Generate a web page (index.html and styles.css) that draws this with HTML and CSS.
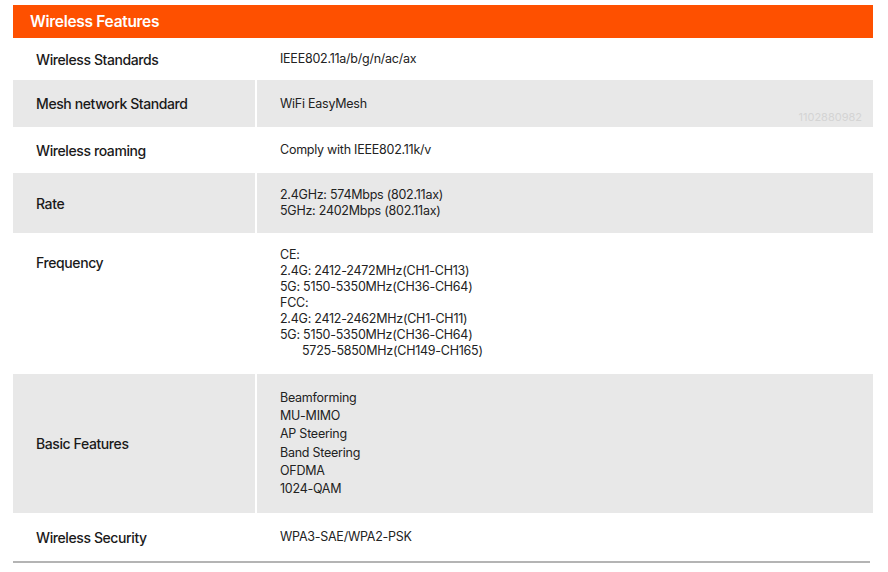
FILE: index.html
```html
<!DOCTYPE html>
<html lang="en">

<head>
  <meta charset="UTF-8">
  <meta name="viewport" content="width=device-width, initial-scale=1.0">
  <title>Wireless Features</title>
  <link rel="stylesheet" href="styles.css">
</head>

<body>
  <div class="spec">
    <div class="spec-title">Wireless Features</div>

    <div class="row row-std">
      <div class="label">Wireless Standards</div>
      <div class="value">IEEE802.11a/b/g/n/ac/ax</div>
    </div>

    <div class="row row-mesh grey">
      <div class="label">Mesh network Standard</div>
      <div class="value">WiFi EasyMesh</div>
      <span class="watermark">1102880982</span>
    </div>

    <div class="row row-roam">
      <div class="label">Wireless roaming</div>
      <div class="value">Comply with IEEE802.11k/v</div>
    </div>

    <div class="row row-rate grey">
      <div class="label">Rate</div>
      <div class="value">
        2.4GHz: 574Mbps (802.11ax)<br>
        5GHz: 2402Mbps (802.11ax)
      </div>
    </div>

    <div class="row row-freq">
      <div class="label label-top">Frequency</div>
      <div class="value value-top">
        CE:<br>
        2.4G: 2412-2472MHz(CH1-CH13)<br>
        5G: 5150-5350MHz(CH36-CH64)<br>
        FCC:<br>
        2.4G: 2412-2462MHz(CH1-CH11)<br>
        5G: 5150-5350MHz(CH36-CH64)<br>
        <span class="indent">5725-5850MHz(CH149-CH165)</span>
      </div>
    </div>

    <div class="row row-basic grey">
      <div class="label">Basic Features</div>
      <div class="value list">
        Beamforming<br>
        MU-MIMO<br>
        AP Steering<br>
        Band Steering<br>
        OFDMA<br>
        1024-QAM
      </div>
    </div>

    <div class="row row-sec last">
      <div class="label">Wireless Security</div>
      <div class="value">WPA3-SAE/WPA2-PSK</div>
    </div>
  </div>
</body>

</html>
```

FILE: styles.css
```css
body {
  margin: 0;
  background: #fff;
  font-family: Inter, "Noto Sans", Arial, sans-serif;
  color: #222;
}

.spec {
  width: 860px;
  margin: 5px 0 0 13px;
}

.spec-title {
  height: 33px;
  line-height: 34px;
  padding-left: 17px;
  background-color: #fe5000;
  color: #fff;
  font-size: 15.5px;
  font-weight: 600;
  letter-spacing: -0.3px;
}

.row {
  position: relative;
  display: grid;
  grid-template-columns: 242px 1fr;
  column-gap: 2px;
}

.row.grey .label,
.row.grey .value {
  background-color: #e8e8e8;
}

.label {
  display: flex;
  align-items: center;
  padding-left: 23px;
  font-size: 14px;
  font-weight: 500;
  letter-spacing: -0.4px;
  color: #1a1a1a;
}

.value {
  display: flex;
  flex-direction: column;
  justify-content: center;
  padding-left: 23px;
  font-size: 12.5px;
  line-height: 16px;
  letter-spacing: -0.25px;
  color: #222;
}

.label-top {
  align-items: flex-start;
  padding-top: 21px;
}

.value-top {
  justify-content: flex-start;
  padding-top: 14px;
}

.value.list {
  line-height: 18.2px;
}

.indent {
  padding-left: 22px;
}

.row-std { height: 42px; }
.row-mesh { height: 47px; }
.row-roam { height: 46px; }
.row-rate { height: 60px; }
.row-freq { height: 141px; }
.row-basic { height: 139px; }
.row-sec { height: 48px; }

.row.last {
  border-bottom: 2px solid #b4b4b4;
  width: 857px;
  grid-template-columns: 242px 613px;
}

.watermark {
  position: absolute;
  right: 11px;
  bottom: 3px;
  font-size: 11px;
  color: #d4d4d4;
  letter-spacing: 0;
}
```
